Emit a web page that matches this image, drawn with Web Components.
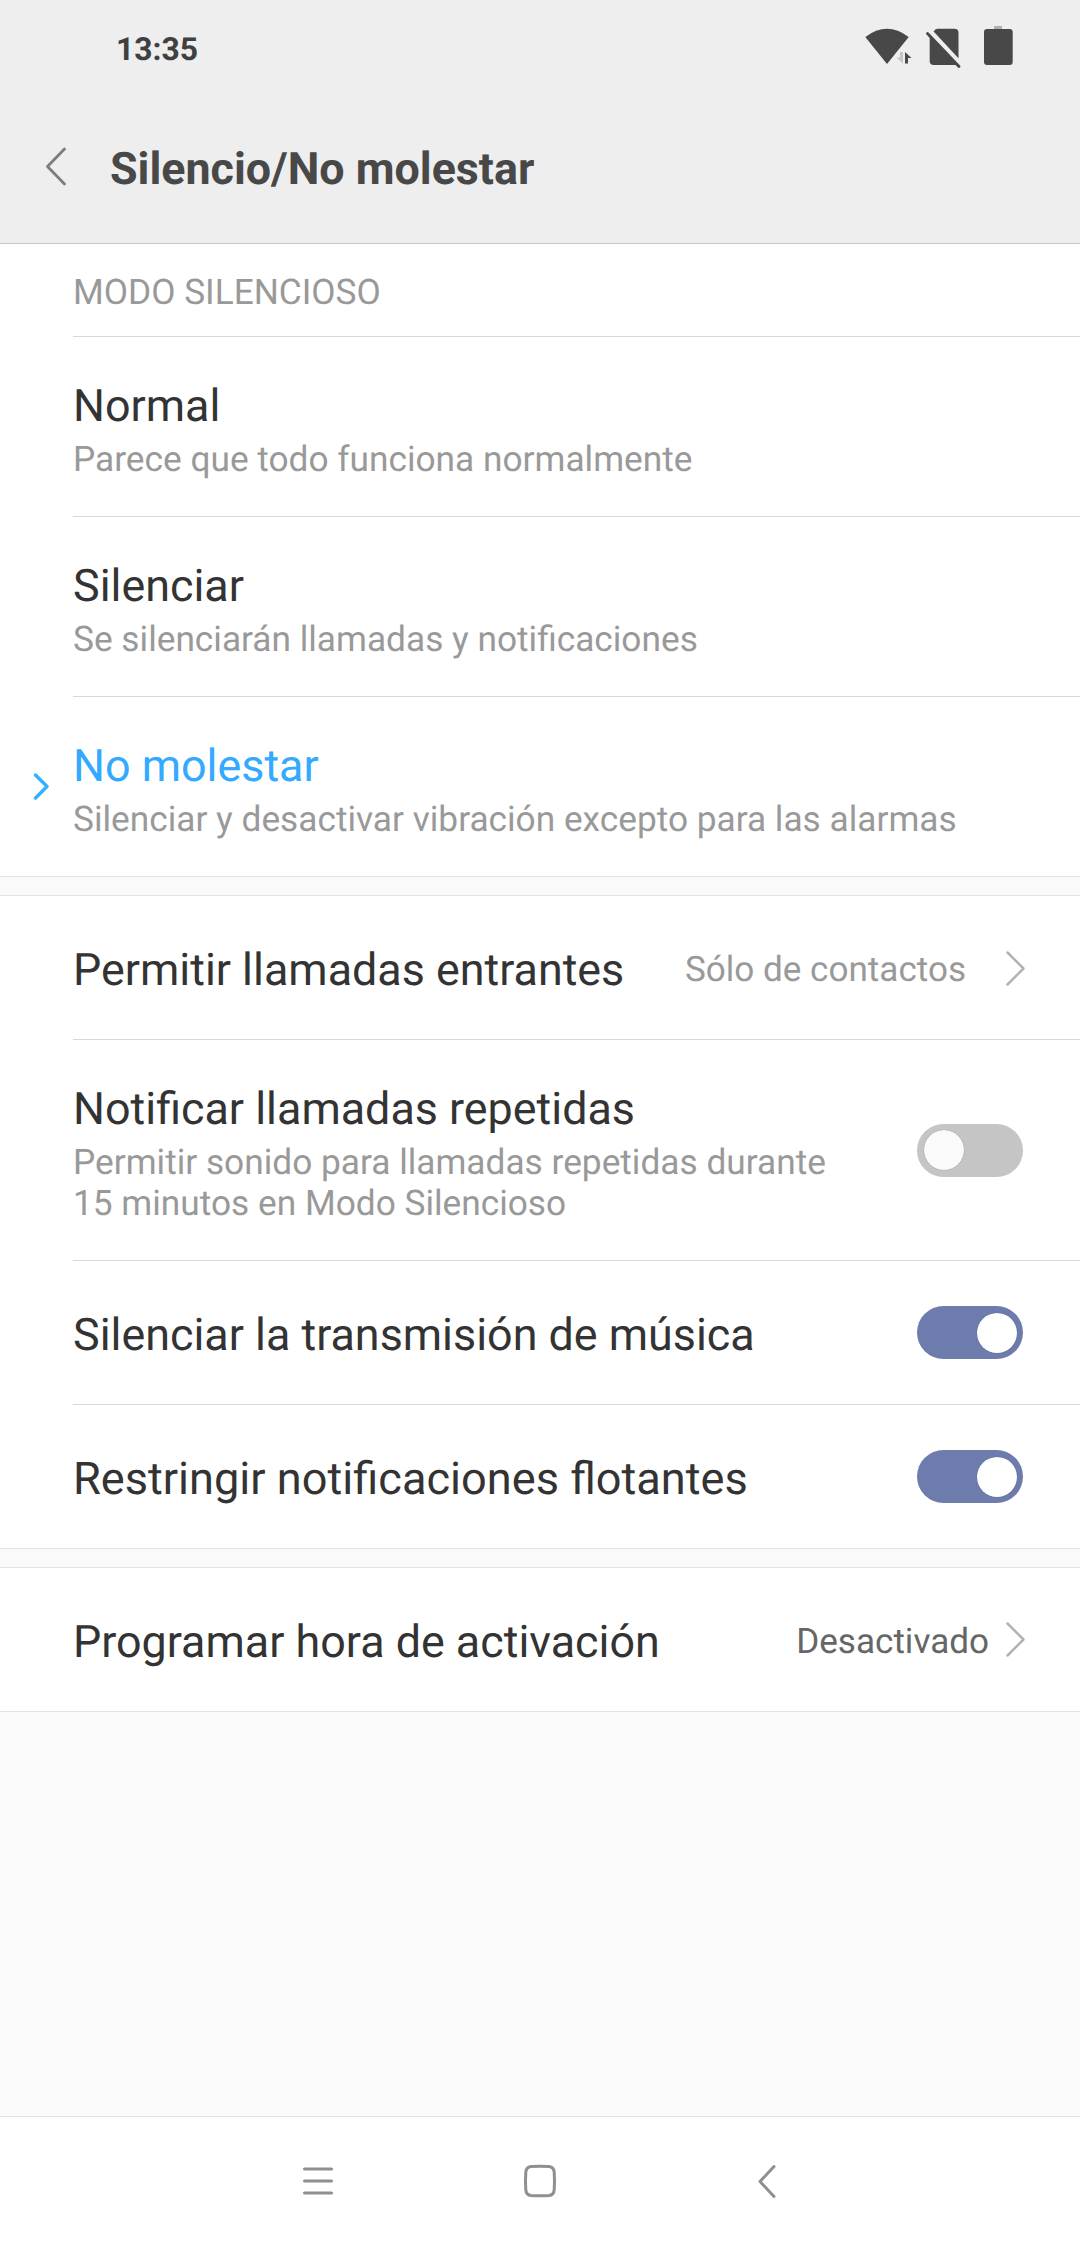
<!DOCTYPE html>
<html lang="es">
<head>
<meta charset="utf-8">
<title>Silencio/No molestar</title>
<style>
  html, body {
    margin: 0;
    height: 100%;
  }
  body {
    font-family: Roboto, "Noto Sans", sans-serif;
    text-rendering: geometricPrecision;
    background: #fafafa;
    overflow: hidden;
  }
  .wider {
    --title-size: 45.150px;
    --title-line: 55px;
    --title-gap: -2px;
  }
</style>
</head>
<body>
<settings-screen>
  <status-bar slot="top" time="13:35"></status-bar>
  <title-bar slot="top">Silencio/No molestar</title-bar>

  <settings-group first>
    <group-label>Modo silencioso</group-label>
    <settings-row>
      Normal
      <span slot="summary">Parece que todo funciona normalmente</span>
    </settings-row>
    <settings-row>
      Silenciar
      <span slot="summary">Se silenciarán llamadas y notificaciones</span>
    </settings-row>
    <settings-row selected>
      No molestar
      <span slot="summary">Silenciar y desactivar vibración excepto para las alarmas</span>
    </settings-row>
  </settings-group>

  <settings-group>
    <settings-row>
      Permitir llamadas entrantes
      <row-value slot="end" wide>Sólo de contactos</row-value>
    </settings-row>
    <settings-row>
      Notificar llamadas repetidas
      <span slot="summary">Permitir sonido para llamadas repetidas durante 15 minutos en Modo Silencioso</span>
      <toggle-switch slot="end"></toggle-switch>
    </settings-row>
    <settings-row>
      Silenciar la transmisión de música
      <toggle-switch slot="end" checked></toggle-switch>
    </settings-row>
    <settings-row class="wider">
      Restringir notificaciones flotantes
      <toggle-switch slot="end" checked></toggle-switch>
    </settings-row>
  </settings-group>

  <settings-group>
    <settings-row>
      Programar hora de activación
      <row-value slot="end" dark>Desactivado</row-value>
    </settings-row>
  </settings-group>

  <nav-bar slot="bottom"></nav-bar>
</settings-screen>

<script>
const define = (name, html) => {
  customElements.define(name, class extends HTMLElement {
    constructor() {
      super();
      this.attachShadow({mode: 'open'}).innerHTML = html;
    }
  });
};

define('settings-screen', `
<style>
  :host {
    display: flex;
    flex-direction: column;
    height: 100vh;
  }
  header {
    box-sizing: border-box;
    height: 244px;
    background: #eee;
    border-bottom: 1px solid #c6c6c6;
  }
  main {
    flex: 1;
    display: flex;
    flex-direction: column;
    gap: 18px;
  }
</style>
<header><slot name="top"></slot></header>
<main><slot></slot></main>
<slot name="bottom"></slot>
`);

class StatusBar extends HTMLElement {
  constructor() {
    super();
    this.attachShadow({mode: 'open'});
  }

  connectedCallback() {
    this.shadowRoot.innerHTML = `
<style>
  :host {
    display: flex;
    justify-content: space-between;
    height: 96px;
    padding: 0 61px 0 116px;
    color: #404040;
  }
  time {
    padding-top: 30px;
    font-size: 31.800px;
    font-weight: 700;
    line-height: 38px;
  }
  svg {
    display: block;
    margin-top: 20px;
  }
</style>
<time>${this.getAttribute('time')}</time>
<svg width="159" height="50" viewBox="860 20 159 50" fill="#484848">
  <path d="M865.3 37Q887 20.500 908.700 37L887 64Z"/>
  <path d="M903 52v11.500l-6.500-6h3.500v-5.500z" fill="#c4c4c4"/>
  <path d="M905 63.500v-11.500l6.500 6h-3.500v5.500z"/>
  <path d="M933.600 31.500q1.400-2.700 3.900-2.700h17q4 0 4 4v25.400z"/>
  <path d="M929.700 35.600l28 28.600q-1 .8-2.600.8h-21.400q-4 0-4-4z"/>
  <path d="M927.500 33.500l31.500 33" stroke="#484848" stroke-width="2.900" stroke-linecap="round"/>
  <path d="M994 26h8v3h-8z" fill="#b0b0b0"/>
  <rect x="984" y="29" width="28.700" height="36" rx="3"/>
</svg>
`;
  }
}
customElements.define('status-bar', StatusBar);

define('title-bar', `
<style>
  :host {
    display: flex;
    align-items: center;
    height: 147px;
    color: #484848;
    font-size: 44.800px;
    font-weight: 700;
    line-height: 53px;
  }
  svg {
    margin: 0 42px 7px 44px;
  }
  span {
    margin-bottom: 2px;
  }
</style>
<svg width="24" height="40" fill="none" stroke="#7d7d7d" stroke-width="2.800" stroke-linecap="round" stroke-linejoin="round">
  <path d="M20.500 3L3.500 20.500L20.500 38"/>
</svg>
<span><slot></slot></span>
`);

define('settings-group', `
<style>
  :host {
    display: block;
    background: #fff;
    border: solid #e2e2e2;
    border-width: 1px 0;
  }
  :host([first]) {
    border-top: 0;
  }
  ::slotted(*:not(:last-child)) {
    --divider: #d9d9d9;
  }
  ::slotted(*:last-child) {
    --divider-size: 0;
  }
</style>
<slot></slot>
`);

define('group-label', `
<style>
  :host {
    display: block;
    margin-left: 73px;
    padding: 28px 0 23px;
    border-bottom: 1px solid #d9d9d9;
    color: #999;
    font-size: 35.250px;
    line-height: 41px;
    text-transform: uppercase;
  }
</style>
<slot></slot>
`);

class SettingsRow extends HTMLElement {
  constructor() {
    super();
    this.attachShadow({mode: 'open'});
  }

  connectedCallback() {
    const summary = this.querySelector('[slot="summary"]');
    const selected = this.hasAttribute('selected');
    this.shadowRoot.innerHTML = `
<style>
  :host {
    display: flex;
  }
  .mark {
    width: 73px;
    display: flex;
    align-items: center;
  }
  .mark svg {
    margin: 0 0 1px 31px;
  }
  .body {
    flex: 1;
    display: flex;
    align-items: center;
    justify-content: space-between;
    padding-right: 53px;
    border-bottom: var(--divider-size, 1px) solid var(--divider, transparent);
  }
  .text {
    padding: ${summary ? '42px 0 36px' : '47px 0 43px'};
  }
  .title {
    margin-bottom: var(--title-gap, 0);
    color: ${selected ? '#33a9ff' : '#333'};
    font-size: var(--title-size, 44.850px);
    line-height: var(--title-line, 53px);
  }
  .summary {
    margin-top: 7px;
    ${this.querySelector('[slot="end"]') ? 'max-width: 780px;' : ''}
    color: #999;
    font-size: 35.250px;
    line-height: 41px;
  }
</style>
<div class="mark">
  ${selected ? `
  <svg width="20" height="30" fill="none" stroke="#33b1ff" stroke-width="3.500" stroke-linecap="round" stroke-linejoin="round">
    <path d="M4.500 4L16 15.500L4.500 27"/>
  </svg>` : ''}
</div>
<div class="body">
  <div class="text">
    <div class="title"><slot></slot></div>
    ${summary ? '<div class="summary"><slot name="summary"></slot></div>' : ''}
  </div>
  <slot name="end"></slot>
</div>
`;
  }
}
customElements.define('settings-row', SettingsRow);

define('row-value', `
<style>
  :host {
    display: flex;
    align-items: center;
    gap: 16px;
    color: #999;
    font-size: 35.100px;
    line-height: 41px;
  }
  :host([wide]) {
    gap: 39px;
  }
  :host([dark]) {
    color: #666;
  }
  :host([dark]) svg {
    margin-bottom: 2px;
  }
  span {
    padding-top: 4px;
  }
</style>
<span><slot></slot></span>
<svg width="22" height="38" fill="none" stroke="#b3b3b3" stroke-width="2.500" stroke-linecap="round" stroke-linejoin="round">
  <path d="M2.500 3.500L18.500 19.500L2.500 35.500"/>
</svg>
`);

define('toggle-switch', `
<style>
  :host {
    box-sizing: border-box;
    display: flex;
    width: 106px;
    height: 53px;
    padding: 6.500px;
    margin-right: 4px;
    border-radius: 27px;
    background: #c5c5c5;
  }
  :host([checked]) {
    justify-content: flex-end;
    background: #6e7cad;
  }
  i {
    width: 40px;
    height: 40px;
    border-radius: 50%;
    background: #fafafa;
    box-shadow: 0 0 1px rgba(0, 0, 0, .4);
  }
  :host([checked]) i {
    background: #fff;
  }
</style>
<i></i>
`);

define('nav-bar', `
<style>
  :host {
    box-sizing: border-box;
    display: flex;
    justify-content: center;
    align-items: center;
    gap: 185px;
    height: 130px;
    padding-bottom: 2px;
    border-top: 1px solid #e2e2e2;
    background: #fff;
  }
  svg {
    fill: none;
    stroke: #8f8f8f;
    stroke-width: 3;
    stroke-linecap: round;
    stroke-linejoin: round;
  }
</style>
<svg width="40" height="40"><path d="M9.500 8h27M9.500 20h27M9.500 32h27"/></svg>
<svg width="40" height="40"><path d="M11 5.500Q20 4.800 29 5.500Q33.700 6 34.200 11Q34.800 20 34.200 29Q33.700 34 29 34.500Q20 35.200 11 34.500Q6.300 34 5.800 29Q5.200 20 5.800 11Q6.300 6 11 5.500Z"/></svg>
<svg width="40" height="40"><path d="M29 5.500L15 20.500L29 35.500"/></svg>
`);
</script>
</body>
</html>
